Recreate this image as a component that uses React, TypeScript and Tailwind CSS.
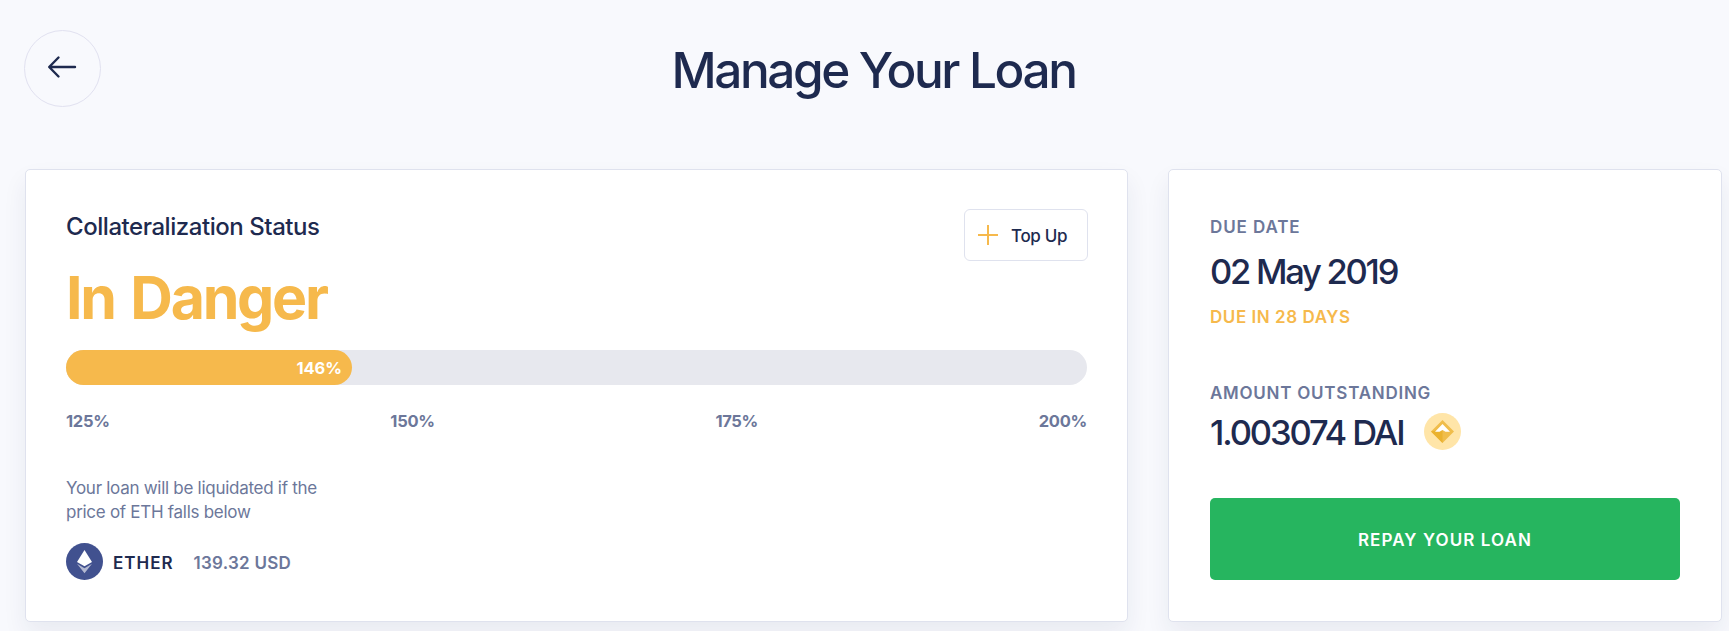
import React from 'react';

const SCALE_LABELS = ['125%', '150%', '175%', '200%'];

const BackIcon = () => (
  <svg width="30" height="24" viewBox="0 0 30 24" fill="none" stroke="#1e2a4f" strokeWidth="2.4" strokeLinecap="round" strokeLinejoin="round">
    <path d="M11.5 2.5 L2.2 12 L11.5 21.5 M2.5 12 H28" />
  </svg>
);

const PlusIcon = () => (
  <svg width="20" height="20" viewBox="0 0 20 20" stroke="#f6b94c" strokeWidth="2">
    <path d="M10 0 V20 M0 10 H20" />
  </svg>
);

const EtherIcon = () => (
  <svg width="37" height="37" viewBox="0 0 37 37">
    <circle cx="18.5" cy="18.5" r="18.5" fill="#41518f" />
    <path d="M18.5 7 L26 19 L18.5 23.3 L11 19 Z" fill="#fff" />
    <path d="M11 20.8 L18.5 25.2 L26 20.8 L18.5 30.2 Z" fill="#b3b9d2" />
  </svg>
);

const DaiIcon = () => (
  <svg width="37" height="37" viewBox="0 0 37 37">
    <circle cx="18.5" cy="18.5" r="18.5" fill="#ffe5a8" />
    <path d="M18.5 7 L30 18.5 L18.5 30 L7 18.5 Z" fill="#f0bd4b" />
    <path d="M7 18.5 L18.5 16.5 V30 Z" fill="#eab22f" />
    <path d="M18.5 11 L26 18.8 H21.5 L18.5 16.9 L15.5 18.8 H11 Z" fill="#fff" />
  </svg>
);

const CollateralCard: React.FC<{ ratio: number }> = ({ ratio }) => (
  <div className="flex h-[453px] w-[1103px] shrink-0 flex-col rounded-[5px] border border-[#dfe2ee] bg-white px-10 pt-[39px] shadow-[0_12px_24px_rgba(30,42,79,0.07)]">
    <div className="flex h-[53px] justify-between">
      <h2 className="mt-[4px] text-[24px] leading-[28px] font-medium tracking-[-0.45px] text-[#1e2a4f]">Collateralization Status</h2>
      <button className="-mr-px flex h-[52px] w-[124px] items-center gap-[13px] rounded-md border border-[#dfe2ee] pl-[13px] text-[17px] font-medium tracking-[-0.35px] text-[#1e2a4f]">
        <PlusIcon />
        <span className="pt-[3px]">Top Up</span>
      </button>
    </div>
    <div className="mt-[6px] h-[82px] text-[59px] leading-[60px] font-bold tracking-[-2.3px] [word-spacing:4px] text-[#f6b94c]">In Danger</div>
    <div className="h-[35px] rounded-full bg-[#e7e8ee]">
      <div
        className="flex h-full items-center justify-end rounded-full bg-[#f6b94c] pt-px pr-[10px] text-[16.5px] font-bold tracking-[-0.1px] text-white"
        style={{ width: `${ratio}%` }}
      >
        146%
      </div>
    </div>
    <div className="mt-[24px] flex justify-between text-[16.5px] leading-[24px] font-bold tracking-[-0.3px] text-[#6c779a]">
      {SCALE_LABELS.map((label) => <span key={label}>{label}</span>)}
    </div>
    <p className="mt-[43px] text-[17px] leading-[24px] tracking-[-0.28px] text-[#6c779a]">
      Your loan will be liquidated if the
      <br />
      price of ETH falls below
    </p>
    <div className="mt-[19px] flex h-[37px] items-center text-[17px] font-semibold">
      <EtherIcon />
      <span className="ml-[10px] pt-[4px] tracking-[1px] text-[#1e2a4f]">ETHER</span>
      <span className="ml-[20px] pt-[4px] tracking-[0.25px] text-[#6c779a]">139.32 USD</span>
    </div>
  </div>
);

const LoanCard = () => (
  <div className="flex h-[453px] w-[554px] shrink-0 flex-col rounded-[5px] border border-[#dfe2ee] bg-white px-[41px] pt-[45px] shadow-[0_12px_24px_rgba(30,42,79,0.07)]">
    <div className="text-[17px] leading-[24px] font-semibold tracking-[0.9px] text-[#6c779a]">DUE DATE</div>
    <div className="mt-[13px] text-[34.5px] leading-[40px] font-[450] tracking-[-2.25px] text-[#1e2a4f]">02 May 2019</div>
    <div className="mt-[13px] text-[17px] leading-[24px] font-semibold tracking-[0.55px] text-[#f6b94c]">DUE IN 28 DAYS</div>
    <div className="mt-[52px] text-[17px] leading-[24px] font-semibold tracking-[0.75px] text-[#6c779a]">AMOUNT OUTSTANDING</div>
    <div className="mt-[8px] flex h-[37px] items-center text-[34.5px] leading-[40px] font-[450] tracking-[-2.1px] text-[#1e2a4f]">
      <span className="w-[214px] pt-[2px] whitespace-nowrap">1.003074 DAI</span>
      <DaiIcon />
    </div>
    <button className="mt-[48px] h-[82px] w-[470px] rounded-[5px] bg-[#26b55f] pt-[4px] text-[17px] font-semibold tracking-[1.1px] text-white">
      REPAY YOUR LOAN
    </button>
  </div>
);

const App: React.FC = () => (
  <div className="h-[631px] w-full overflow-hidden bg-[#f8f9fd] font-['Inter',sans-serif]">
    <header className="grid h-[169px] grid-cols-[1fr_auto_1fr] items-start pr-[6px] pl-[24px]">
      <button className="mt-[30px] flex h-[77px] w-[77px] items-center justify-center rounded-full border border-[#e1e1f0] pb-[3px] pr-[2px]">
        <BackIcon />
      </button>
      <h1 className="mt-[40px] text-[49.5px] leading-[60px] font-medium tracking-[-2.4px] text-[#1e2a4f]">Manage Your Loan</h1>
    </header>
    <main className="flex gap-[40px] pl-[25px]">
      <CollateralCard ratio={28} />
      <LoanCard />
    </main>
  </div>
);

export default App;
